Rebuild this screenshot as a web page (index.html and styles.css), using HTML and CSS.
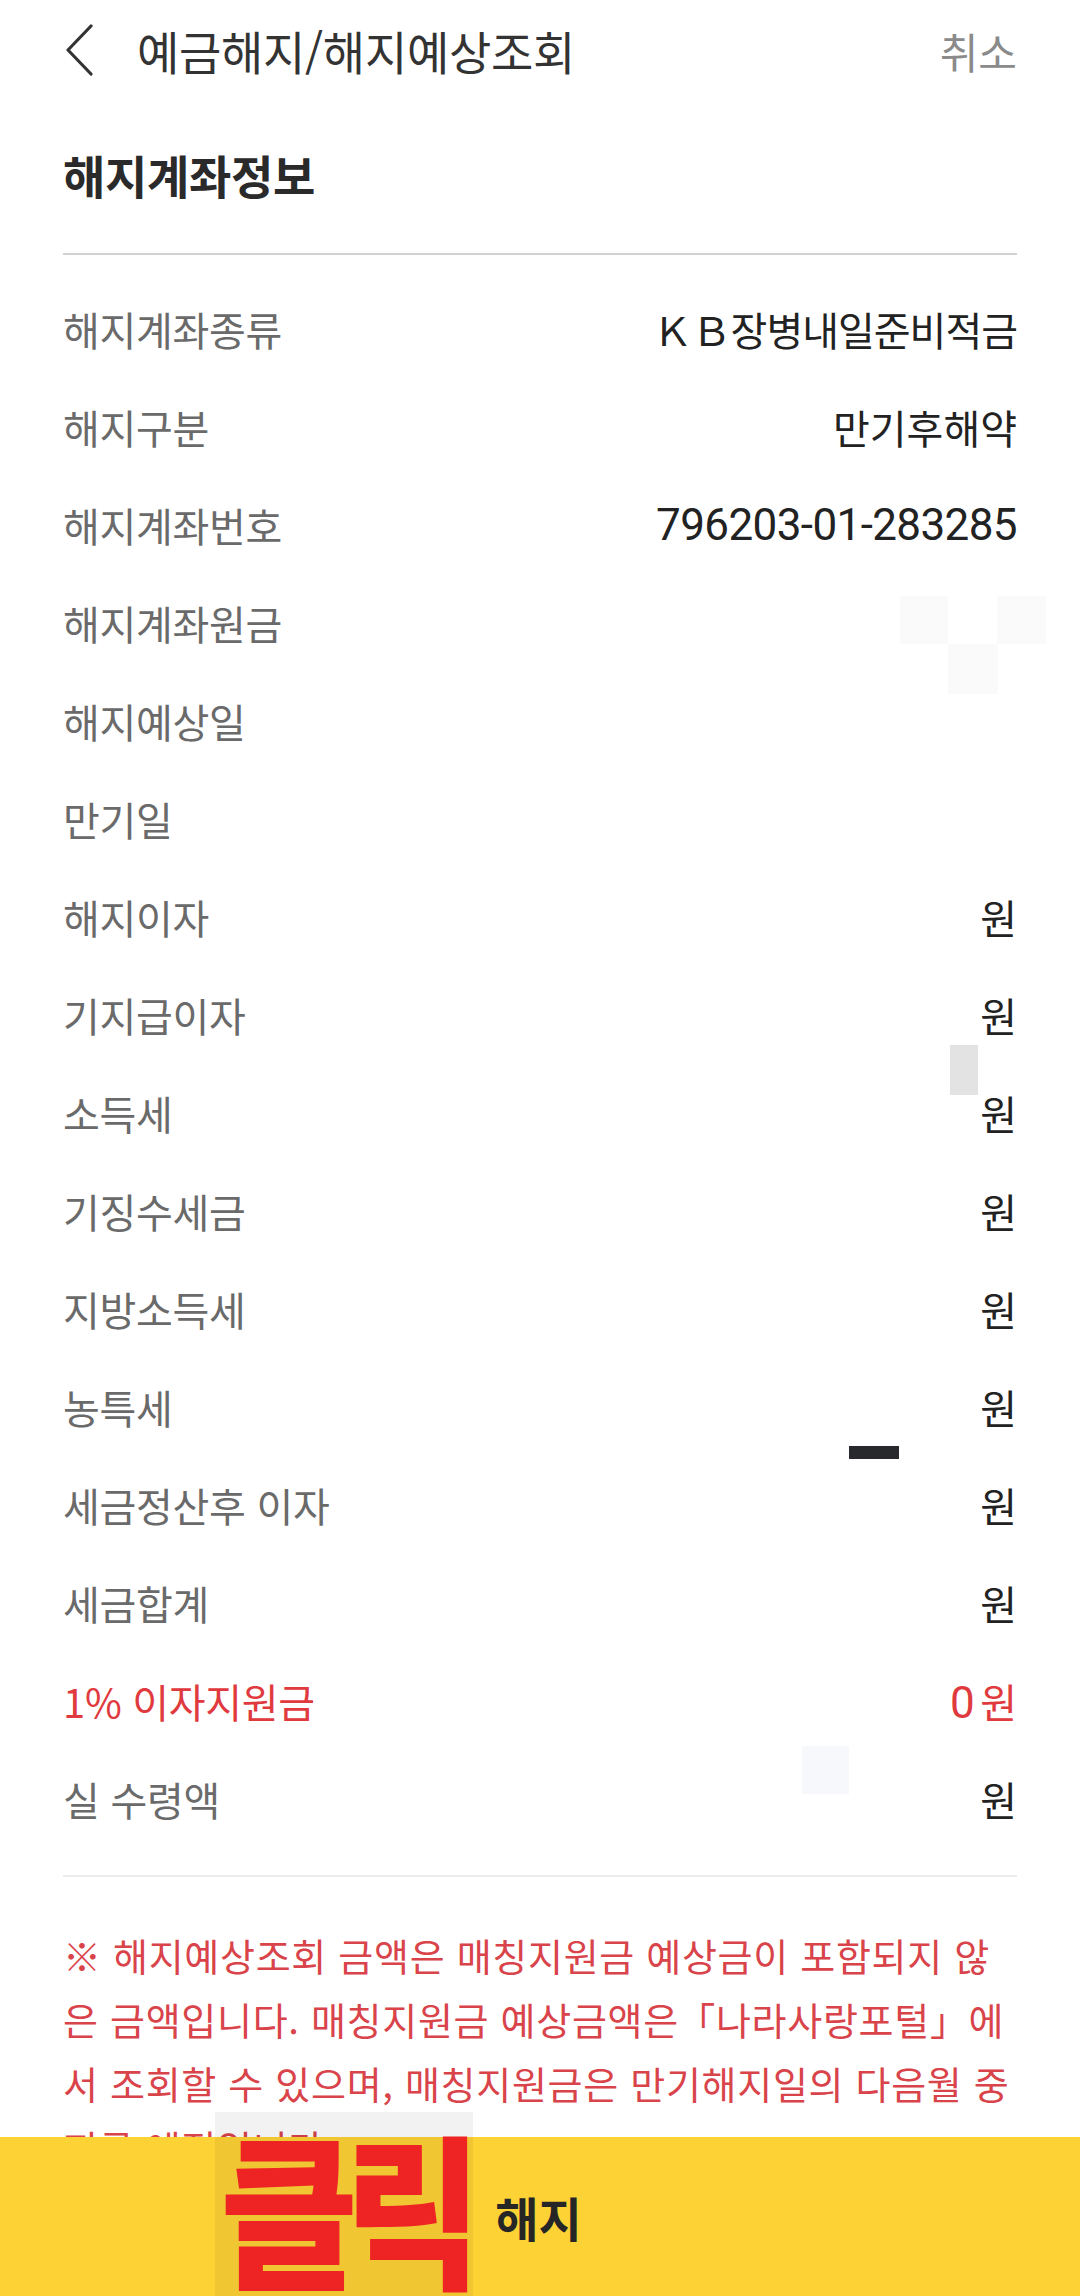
FILE: index.html
```html
<!DOCTYPE html>
<html lang="ko">
<head>
    <meta charset="utf-8">
    <link rel="stylesheet" href="styles.css">
</head>
<body>
    <header class="top-bar">
        <button class="back-btn" aria-label="뒤로">
            <svg viewBox="0 0 30 52" width="30" height="52" fill="none" stroke="currentColor" stroke-width="3.2" stroke-linecap="round" stroke-linejoin="round">
                <path d="M27 2 L4 26 L27 50"/>
            </svg>
        </button>
        <h1 class="top-title">예금해지/해지예상조회</h1>
        <span class="cancel">취소</span>
    </header>

    <main class="content">
        <h2 class="section-title">해지계좌정보</h2>

        <dl class="info-list">
            <div class="info-row"><dt>해지계좌종류</dt><dd class="kb">ＫＢ장병내일준비적금</dd></div>
            <div class="info-row"><dt>해지구분</dt><dd>만기후해약</dd></div>
            <div class="info-row"><dt>해지계좌번호</dt><dd class="num">796203-01-283285</dd></div>
            <div class="info-row"><dt>해지계좌원금</dt><dd></dd></div>
            <div class="info-row"><dt>해지예상일</dt><dd></dd></div>
            <div class="info-row"><dt>만기일</dt><dd></dd></div>
            <div class="info-row"><dt>해지이자</dt><dd>원</dd></div>
            <div class="info-row"><dt>기지급이자</dt><dd>원</dd></div>
            <div class="info-row"><dt>소득세</dt><dd>원</dd></div>
            <div class="info-row"><dt>기징수세금</dt><dd>원</dd></div>
            <div class="info-row"><dt>지방소득세</dt><dd>원</dd></div>
            <div class="info-row"><dt>농특세</dt><dd>원</dd></div>
            <div class="info-row"><dt>세금정산후 이자</dt><dd>원</dd></div>
            <div class="info-row"><dt>세금합계</dt><dd>원</dd></div>
            <div class="info-row red"><dt>1% 이자지원금</dt><dd><span class="num amount">0</span>원</dd></div>
            <div class="info-row"><dt>실 수령액</dt><dd>원</dd></div>

            <!-- blurred-out values -->
            <span class="mask mask-faint m1"></span>
            <span class="mask mask-faint m2"></span>
            <span class="mask mask-faint m3"></span>
            <span class="mask mask-faint m4"></span>
            <span class="mask mask-gray"></span>
            <span class="mask mask-dark"></span>
        </dl>

        <p class="notice">※ 해지예상조회 금액은 매칭지원금 예상금이 포함되지 않은 금액입니다. 매칭지원금 예상금액은 <span class="half">「</span>나라사랑포털」에서 조회할 수 있으며, 매칭지원금은 만기해지일의 다음월 중 지급 예정입니다.</p>
    </main>

    <footer class="bottom-bar">
        <button class="cancel-btn">해지</button>
        <div class="click-mark"><span>클릭</span></div>
    </footer>
</body>
</html>
```

FILE: styles.css
```css
* {
    margin: 0;
    padding: 0;
    box-sizing: border-box;
}

body {
    font-family: "Noto Sans CJK KR", "Noto Sans", sans-serif;
    background: #ffffff;
    color: #222222;
    width: 1080px;
    min-height: 2296px;
}

.top-bar {
    display: flex;
    align-items: center;
    height: 100px;
    padding: 0 63px 0 64px;
}

.back-btn {
    border: none;
    background: none;
    color: #333333;
    display: flex;
    width: 30px;
    height: 52px;
    margin-right: 43px;
}

.top-title {
    flex: 1;
    font-size: 46px;
    font-weight: 400;
    color: #333333;
    letter-spacing: -0.3px;
}

.cancel {
    font-size: 42px;
    color: #8a8a8a;
}

.content {
    padding: 0 63px 200px;
}

.section-title {
    font-size: 46px;
    font-weight: 700;
    color: #2a2a2a;
    line-height: 60px;
    margin-top: 44px;
    padding-bottom: 49px;
    border-bottom: 2px solid #d2d2d2;
    letter-spacing: -0.3px;
}

.info-list {
    position: relative;
    padding: 25px 0 27px;
    border-bottom: 2px solid #ececec;
}

.info-row {
    display: flex;
    justify-content: space-between;
    align-items: center;
    height: 98px;
    font-size: 40px;
}

.info-row dt {
    color: #6a6a6a;
    letter-spacing: -0.3px;
}

.info-row dd {
    color: #222222;
}

.info-row dd.kb {
    letter-spacing: -1px;
}

.num {
    font-family: Roboto, "Noto Sans", sans-serif;
    font-size: 44px;
    letter-spacing: -0.6px;
}

.amount {
    margin-right: 6px;
}

.info-row.red dt,
.info-row.red dd {
    color: #e03a3e;
}

.mask {
    position: absolute;
}

.mask-faint {
    background: #fafafa;
}

.m1 { left: 837px; top: 341px; width: 48px; height: 48px; }
.m2 { left: 934px; top: 341px; width: 49px; height: 48px; }
.m3 { left: 885px; top: 389px; width: 50px; height: 50px; }
.m4 { left: 739px; top: 1491px; width: 47px; height: 48px; background: #f7f8fc; }

.mask-gray {
    left: 887px;
    top: 790px;
    width: 28px;
    height: 50px;
    background: #e3e3e3;
}

.mask-dark {
    left: 786px;
    top: 1191px;
    width: 50px;
    height: 13px;
    background: #28292c;
}

.notice {
    margin-top: 46px;
    font-size: 38px;
    line-height: 64px;
    color: #d9434a;
    letter-spacing: 0.7px;
}

.notice .half {
    font-feature-settings: "halt";
    margin-left: 6px;
}

.bottom-bar {
    position: fixed;
    left: 0;
    right: 0;
    bottom: 0;
    height: 159px;
    background: #fdd235;
    display: flex;
    align-items: center;
    justify-content: center;
}

.cancel-btn {
    border: none;
    background: none;
    font-family: "Noto Sans CJK KR", sans-serif;
    font-size: 47px;
    font-weight: 700;
    color: #262626;
    margin-left: -3px;
}

.click-mark {
    position: absolute;
    left: 215px;
    top: -25px;
    width: 258px;
    height: 184px;
    background: rgba(0, 0, 0, 0.05);
    color: #ee2424;
    text-align: center;
    overflow: hidden;
}

.click-mark span {
    display: inline-block;
    font-size: 150px;
    font-weight: 900;
    line-height: 1;
    letter-spacing: -14px;
    margin-top: 10px;
    transform: scaleY(1.1);
    transform-origin: top center;
}
```
